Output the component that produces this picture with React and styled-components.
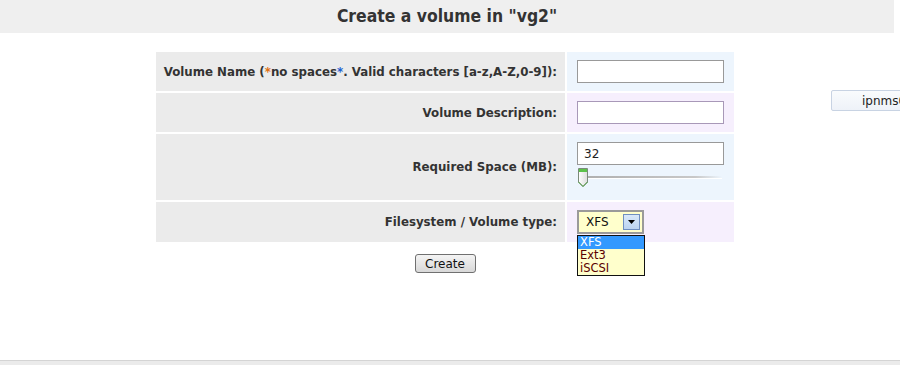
import React from "react";
import styled, { createGlobalStyle } from "styled-components";

const Global = createGlobalStyle`
  html, body { margin: 0; padding: 0; background: #fff; overflow: hidden; }
  body { font-family: "DejaVu Sans", Verdana, sans-serif; }
`;

const Page = styled.div`
  display: flex;
  flex-direction: column;
  height: 365px;
  width: 900px;
  position: relative;
`;

const Header = styled.h1`
  margin: 0;
  width: 894px;
  height: 33px;
  line-height: 33px;
  background: #efefef;
  text-align: center;
  font-family: "DejaVu Sans Condensed", "Liberation Sans Narrow", sans-serif;
  font-weight: bold;
  font-size: 17.4px;
  color: #333;
`;

const Content = styled.div`
  width: 890px;
  display: flex;
  flex-direction: column;
  align-items: center;
  padding-top: 19px;
`;

const FormGrid = styled.div`
  display: grid;
  grid-template-columns: 409px 167px;
  grid-template-rows: 39px 39px 66px 40px;
  gap: 2px;
  width: 578px;
`;

const Label = styled.div`
  background: #ebebeb;
  display: flex;
  align-items: center;
  justify-content: flex-end;
  padding-right: 8px;
  font-family: "DejaVu Sans", Verdana, sans-serif;
  font-weight: bold;
  font-size: 11.8px;
  color: #333;
  white-space: nowrap;
`;

const Star = styled.span`
  color: ${(p) => p.$c};
`;

const Field = styled.div`
  background: ${(p) => (p.$alt ? "#f6effd" : "#edf5fd")};
  padding-left: 10px;
  display: flex;
  flex-direction: column;
  justify-content: ${(p) => (p.$top ? "flex-start" : "center")};
  padding-top: ${(p) => (p.$top ? "8px" : "0")};
  position: relative;
`;

const TextInput = styled.input`
  box-sizing: border-box;
  width: 147px;
  height: 23px;
  border: 1px solid ${(p) => p.$border || "#999"};
  background: #fff;
  padding: 0 6px;
  font-family: "DejaVu Sans", Verdana, sans-serif;
  font-size: 12px;
  color: #222;
  outline: none;
`;

const SliderRow = styled.div`
  display: flex;
  align-items: center;
  margin-top: 2px;
  height: 21px;
  width: 145px;
`;

const Track = styled.div`
  flex: 1;
  height: 2px;
  margin-left: -1px;
  background: linear-gradient(to right, #b0b0b0, #c8c8c8 80%, rgba(220,220,220,0));
  border-bottom: 1px solid #fff;
`;

const Select = styled.div`
  box-sizing: border-box;
  width: 67px;
  height: 24px;
  border: 2px solid #9a9a9a;
  background: #ffffcc;
  display: flex;
  align-items: center;
  justify-content: space-between;
  padding: 0 2px 0 7px;
  font-family: "DejaVu Sans", Tahoma, sans-serif;
  font-size: 12px;
  color: #111;
  margin-top: -1px;
`;

const ArrowBtn = styled.div`
  box-sizing: border-box;
  width: 17px;
  height: 16px;
  border: 1px solid #6f8fc0;
  background: linear-gradient(#d8e8fa, #bcd4f0);
  display: flex;
  align-items: center;
  justify-content: center;
`;

const List = styled.ul`
  position: absolute;
  left: 10px;
  top: 33px;
  margin: 0;
  padding: 0;
  list-style: none;
  box-sizing: border-box;
  width: 68px;
  border: 1px solid #111;
  background: #ffffcc;
  z-index: 2;
`;

const Option = styled.li`
  height: 13px;
  line-height: 13px;
  padding-left: 2px;
  font-family: "DejaVu Sans", Tahoma, sans-serif;
  font-size: 11.5px;
  color: ${(p) => (p.$sel ? "#fff" : "#5a0000")};
  background: ${(p) => (p.$sel ? "#3399ff" : "transparent")};
`;

const Button = styled.button`
  margin-top: 12px;
  width: 61px;
  height: 19px;
  padding: 0;
  border: 1px solid #707070;
  border-radius: 3px;
  background: linear-gradient(#f4f4f4, #e6e6e6 50%, #d8d8d8);
  font-family: "DejaVu Sans", Tahoma, sans-serif;
  font-size: 12px;
  color: #111;
`;

const SideButton = styled.button`
  position: absolute;
  left: 831px;
  top: 90px;
  width: 100px;
  height: 21px;
  border: 1px solid #c8d3e3;
  border-radius: 2px;
  background: linear-gradient(#f9fbfd, #eef2f8);
  text-align: left;
  padding: 0 0 0 30px;
  font-family: "DejaVu Sans", Tahoma, sans-serif;
  font-size: 12px;
  color: #222;
  white-space: nowrap;
`;

const Footer = styled.div`
  margin-top: auto;
  height: 4px;
  border-top: 1px solid #d4d4d4;
  background: #ebebeb;
`;

function Handle() {
  return (
    <svg width="12" height="21" viewBox="0 0 12 21">
      <defs>
        <linearGradient id="hb" x1="0" x2="1" y1="0" y2="0">
          <stop offset="0" stopColor="#ffffff" />
          <stop offset="1" stopColor="#dcdcdc" />
        </linearGradient>
      </defs>
      <path d="M1.5 1.5 H10.5 V15 L6 19.5 L1.5 15 Z" fill="url(#hb)" stroke="#7a8a7a" />
      <rect x="2" y="2" width="8" height="3" fill="#5cc24a" />
      <path d="M1.5 15 L6 19.5 L10.5 15" fill="none" stroke="#4a9a3a" />
    </svg>
  );
}

export default function App() {
  return (
    <Page>
      <Global />
      <Header>Create a volume in "vg2"</Header>
      <Content>
        <FormGrid>
          <Label>
            Volume Name (<Star $c="#e07010">*</Star>no spaces<Star $c="#2060d0">*</Star>. Valid characters [a-z,A-Z,0-9]):
          </Label>
          <Field>
            <TextInput />
          </Field>
          <Label>Volume Description:</Label>
          <Field $alt>
            <TextInput $border="#a898b8" />
          </Field>
          <Label>Required Space (MB):</Label>
          <Field $top>
            <TextInput defaultValue="32" />
            <SliderRow>
              <Handle />
              <Track />
            </SliderRow>
          </Field>
          <Label>Filesystem / Volume type:</Label>
          <Field $alt>
            <Select>
              <span>XFS</span>
              <ArrowBtn>
                <svg width="7" height="4" viewBox="0 0 7 4">
                  <path d="M0 0 H7 L3.5 4 Z" fill="#000" />
                </svg>
              </ArrowBtn>
            </Select>
            <List>
              <Option $sel>XFS</Option>
              <Option>Ext3</Option>
              <Option>iSCSI</Option>
            </List>
          </Field>
        </FormGrid>
        <Button>Create</Button>
      </Content>
      <SideButton>ipnms01</SideButton>
      <Footer />
    </Page>
  );
}
